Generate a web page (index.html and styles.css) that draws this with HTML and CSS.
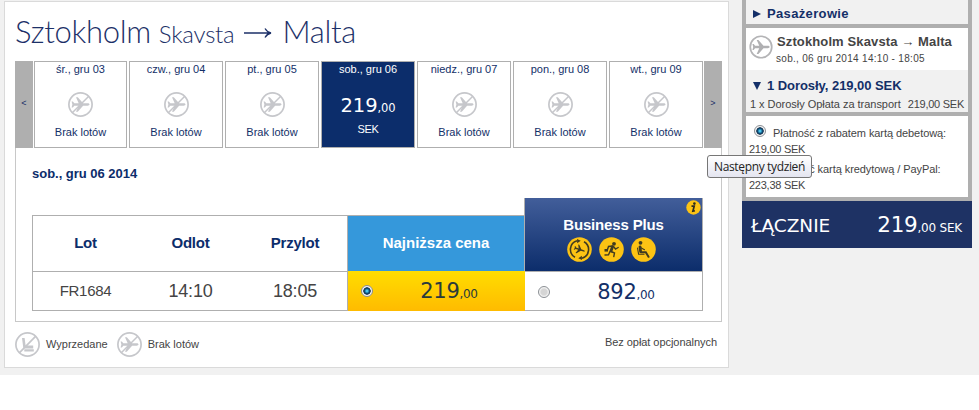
FILE: index.html
```html
<!DOCTYPE html>
<html lang="pl">
<head>
<meta charset="utf-8">
<title>Sztokholm Skavsta → Malta</title>
<link rel="stylesheet" href="styles.css">
</head>
<body>
<svg class="defs" width="0" height="0">
  <defs>
    <path id="plane" d="M21.500 12.500c0-.7-.9-1.200-1.900-1.200h-4.500L9.800 5.300H8l2.700 6H6.300L4.900 9.500H3.600l.8 3-.8 3h1.300l1.400-1.800h4.400l-2.700 6h1.800l5.300-6h4.500c1 0 1.900-.5 1.900-1.200z"/>
    <symbol id="noflight" viewBox="0 0 25 25">
      <circle cx="12.500" cy="12.500" r="11.600" fill="#fff" stroke="#c6c7cb" stroke-width="1.700"/>
      <use href="#plane" fill="#c6c7cb"/>
      <path d="M4.300 20.800 20.800 4.200" stroke="#c6c7cb" stroke-width="1.500"/>
    </symbol>
    <symbol id="soldout" viewBox="0 0 25 25">
      <circle cx="12.500" cy="12.500" r="11.600" fill="#fff" stroke="#c6c7cb" stroke-width="1.700"/>
      <path d="M7 6h2.600l1 7.500h7.600v3H9.600c-.8 0-1.300-.5-1.400-1.200zM9.300 17.300h9.500v2.200H9.300z" fill="#c6c7cb"/>
      <path d="M4.300 20.800 20.800 4.200" stroke="#c6c7cb" stroke-width="1.700"/>
    </symbol>
  </defs>
</svg>
<div class="page">
  <main class="card">
    <h1 class="route"><span class="city">Sztokholm</span><span class="airport">Skavsta</span><svg class="arrow" width="28" height="12" viewBox="0 0 28 12"><path d="M0 6H26.500M21 1.500C22.500 4 24.500 5.500 27 6C24.500 6.500 22.500 8 21 10.500" fill="none" stroke="#1c3068" stroke-width="1.300"/></svg><span class="dest">Malta</span></h1>
    <div class="week">
      <div class="nav">&lt;</div>
      <div class="day"><span class="date">śr., gru 03</span><svg class="ico"><use href="#noflight"/></svg><span class="none">Brak lotów</span></div>
      <div class="day"><span class="date">czw., gru 04</span><svg class="ico"><use href="#noflight"/></svg><span class="none">Brak lotów</span></div>
      <div class="day"><span class="date">pt., gru 05</span><svg class="ico"><use href="#noflight"/></svg><span class="none">Brak lotów</span></div>
      <div class="day active"><span class="date">sob., gru 06</span><span class="amount">219<small>,00</small></span><span class="cur">SEK</span></div>
      <div class="day"><span class="date">niedz., gru 07</span><svg class="ico"><use href="#noflight"/></svg><span class="none">Brak lotów</span></div>
      <div class="day"><span class="date">pon., gru 08</span><svg class="ico"><use href="#noflight"/></svg><span class="none">Brak lotów</span></div>
      <div class="day"><span class="date">wt., gru 09</span><svg class="ico"><use href="#noflight"/></svg><span class="none">Brak lotów</span></div>
      <div class="nav">&gt;</div>
    </div>
    <section class="panel">
      <h2 class="chosen">sob., gru 06 2014</h2>
      <div class="fares">
        <div class="flight">
          <div class="th">Lot</div><div class="th">Odlot</div><div class="th">Przylot</div>
          <div class="td num">FR1684</div><div class="td time">14:10</div><div class="td time">18:05</div>
        </div>
        <div class="low">
          <div class="low-head">Najniższa cena</div>
          <div class="price gold"><i class="radio on"></i><span class="fare">219<small>,00</small></span></div>
        </div>
        <div class="plus">
          <div class="plus-head">
            <svg class="info" width="15" height="15" viewBox="0 0 15 15"><circle cx="7.500" cy="7.500" r="7.200" fill="#fcc314"/><circle cx="8.400" cy="3.600" r="1.300" fill="#2b2a20"/><path d="M5.500 6.200h2.700L6.900 11.200l2-.5" fill="none" stroke="#2b2a20" stroke-width="1.700"/></svg>
            <span class="plus-name">Business Plus</span>
            <div class="perks">
              <svg width="25" height="25" viewBox="0 0 25 25"><circle cx="12.500" cy="12.500" r="12.300" fill="#fcc314"/><path d="M10 3.800A9 9 0 0 0 8 20.300M15 21.200A9 9 0 0 0 17 4.700" fill="none" stroke="#403b20" stroke-width="1.600"/><path d="M10 1.900l3.700 1.900-3.500 2.500zM15 23.100l-3.700-1.900 3.500-2.500z" fill="#403b20"/><use href="#plane" fill="#403b20" transform="translate(12.500 12.500) rotate(18) scale(.62) translate(-12.500 -12.500)"/></svg>
              <svg width="25" height="25" viewBox="0 0 25 25"><circle cx="12.500" cy="12.500" r="12.300" fill="#fcc314"/><circle cx="15" cy="6.800" r="1.900" fill="#403b20"/><path d="M13.500 9.800 12 14" stroke="#403b20" stroke-width="2.800" stroke-linecap="round"/><path d="M13.500 9 9.500 9.500 8.500 12.500M14.500 9.500 16.500 12 19.200 10.500M12 14.500 15.500 16 14.800 19.500M11 14.500 9.500 17.800 6 18" fill="none" stroke="#403b20" stroke-width="1.400" stroke-linecap="round"/><path d="M5.500 12h3.500v2.600H5.500z" fill="#403b20"/></svg>
              <svg width="25" height="25" viewBox="0 0 25 25"><circle cx="12.500" cy="12.500" r="12.300" fill="#fcc314"/><circle cx="9.500" cy="5.800" r="1.900" fill="#403b20"/><path d="M9 9.800 9.600 14.500" stroke="#403b20" stroke-width="2.800" stroke-linecap="round"/><path d="M10 15.200H14.800L17.500 19.800" fill="none" stroke="#403b20" stroke-width="2" stroke-linecap="round"/><path d="M9.500 10.500 13.500 12.700M6.500 11 7.600 17.200H13" fill="none" stroke="#403b20" stroke-width="1.100" stroke-linecap="round"/></svg>
            </div>
          </div>
          <div class="price"><i class="radio"></i><span class="fare">892<small>,00</small></span></div>
        </div>
      </div>
    </section>
    <footer class="legend">
      <svg class="ico"><use href="#soldout"/></svg><span class="sold">Wyprzedane</span>
      <svg class="ico"><use href="#noflight"/></svg><span class="nof">Brak lotów</span>
      <span class="note">Bez opłat opcjonalnych</span>
    </footer>
  </main>
  <aside class="summary">
    <div class="pax"><i class="tri right"></i><b class="pax-t">Pasażerowie</b></div>
    <div class="trip">
      <svg width="24" height="24" viewBox="0 0 25 25"><circle cx="12.500" cy="12.500" r="11.200" fill="none" stroke="#b4b4b6" stroke-width="1.800"/><use href="#plane" fill="#b0b0b2"/></svg>
      <div class="trip-txt"><b class="trip-name">Sztokholm Skavsta → Malta</b><span class="trip-date">sob., 06 gru 2014 14:10 - 18:05</span></div>
    </div>
    <div class="adult">
      <div class="adult-h"><i class="tri down"></i><b class="adult-t">1 Dorosły, 219,00 SEK</b></div>
      <div class="line"><span class="fee">1 x Dorosły Opłata za transport</span><span class="feev">219,00 SEK</span></div>
    </div>
    <div class="pay">
      <div class="row1"><i class="radio on"></i><span class="debit">Płatność z rabatem kartą debetową:</span></div>
      <div class="val">219,00 SEK</div>
      <div class="row2"><i class="radio"></i><span class="credit">Płatność kartą kredytową / PayPal:</span></div>
      <div class="val">223,38 SEK</div>
    </div>
    <div class="total"><span class="total-l">ŁĄCZNIE</span><span class="total-v">219<small>,00 SEK</small></span></div>
  </aside>
  <div class="tooltip"><span>Następny tydzień</span></div>
</div>
</body>
</html>
```
FILE: styles.css
```css
* { box-sizing: border-box; }
body { margin: 0; height: 410px; background: #fff; overflow: hidden; font: 11px/14px "Liberation Sans", Arial, sans-serif; color: #444; white-space: nowrap; }
.defs { position: absolute; }
.page { position: relative; display: flex; align-items: flex-start; height: 375px; padding: 1px 0 0 4px; background: #f1f1f1; }
.card { width: 725px; height: 367px; padding: 0 5px 0 10px; background: #fff; border: 1px solid #dadada; }
.route { display: flex; align-items: baseline; height: 59px; margin: 0; padding-top: 11px; font: 300 31px/36px Lato, sans-serif; color: #1c3068; }
.city { letter-spacing: -.3px; }
.airport { margin-left: 8px; font-size: 24px; letter-spacing: -.25px; }
.arrow { margin: 0 10px 0 10px; position: relative; top: -4px; }
.dest { letter-spacing: -.3px; }
.week { display: flex; gap: 2px; width: 707px; height: 87px; }
.nav { width: 18px; background: #afafaf; color: #1c3068; font-size: 9px; line-height: 85px; text-align: center; }
.nav:first-child { margin-right: -1px; }
.nav:last-child { margin-left: -1px; }
.day { display: flex; flex-direction: column; align-items: center; width: 94px; border: 1px solid #afafaf; color: #132f68; }
.nav + .day { width: 93px; }
.date { height: 30px; line-height: 14px; }
.ico { width: 25px; height: 25px; flex: none; }
.none { margin-top: 8px; }
.active { background: #0c2d6b; color: #fff; }
.amount { height: 30px; font: 19.5px/28px "DejaVu Sans", Verdana, sans-serif; letter-spacing: -.1px; }
.amount small { font-size: 11.5px; }
.cur { line-height: 14px; letter-spacing: -.3px; }
.panel { width: 707px; height: 174px; border: 1px solid #c8c8c8; border-top: 0; padding: 17px 0 0 16px; }
.chosen { height: 33px; margin: 0; font-size: 13px; line-height: 18px; color: #0c2d6b; letter-spacing: -.02px; }
.fares { display: flex; align-items: flex-end; width: 671px; height: 113px; }
.flight { display: grid; grid-template-columns: 105px 105px 104px; grid-template-rows: 56px 39px; width: 316px; height: 96px; border: 1px solid #afafaf; }
.th { font-weight: bold; font-size: 15px; line-height: 54px; text-align: center; color: #0c2d6b; border-bottom: 1px solid #afafaf; letter-spacing: -.2px; }
.td { text-align: center; line-height: 38px; }
.num { font-size: 15px; letter-spacing: -.3px; }
.time { font-size: 18px; letter-spacing: -.2px; }
.low { width: 176px; height: 96px; }
.low-head { height: 56px; border-top: 1px solid #afafaf; background: #3598db; color: #fff; font: bold 15px/54px "Liberation Sans", sans-serif; text-align: center; }
.price { display: flex; align-items: center; height: 39px; padding-left: 13px; color: #132f68; }
.gold { width: 177px; position: relative; height: 40px; padding-bottom: 1px; background: linear-gradient(#fd0, #fb0); color: #2a3a3c; }
.fare { width: 112px; margin-left: 20px; padding-top: 3px; text-align: center; font: 21px/38px "DejaVu Sans", Verdana, sans-serif; letter-spacing: -.3px; }
.fare small { font-size: 12px; }
.plus { width: 179px; height: 113px; border: solid #afafaf; border-width: 0 1px 1px; }
.plus-head { position: relative; display: flex; flex-direction: column; align-items: center; height: 74px; border-bottom: 1px solid #afafaf; padding-top: 18px; background: linear-gradient(#425e9a, #0c2d6b); }
.plus-name { font: bold 15px/18px "Liberation Sans", sans-serif; color: #fff; letter-spacing: -.15px; }
.info { position: absolute; top: 2px; right: 1px; }
.perks { display: flex; gap: 7px; margin: 3px 4px 0 0; }
.radio { width: 12px; height: 12px; flex: none; border: 1px solid #8b8f94; border-radius: 50%; background: radial-gradient(#d5d5d5 40%, #f4f4f4 65%); }
.radio.on { background: radial-gradient(circle closest-side, #47c5ee 15%, #0d4a74 50%, #12304c 68%, #f4f4f4 80%); }
.legend { display: flex; align-items: center; width: 707px; height: 45px; }
.sold, .nof { margin: 0 9px 2px 6px; }
.note { margin: 0 5px 6px auto; letter-spacing: -.05px; }
.summary { width: 230px; height: 248px; margin: -1px 0 0 13px; background: #afafaf; }
.pax { display: flex; align-items: center; height: 24px; margin: 0 4px; padding: 3px 0 0 7px; background: #f1f1f1; }
.tri { width: 0; height: 0; }
.right { border: solid transparent; border-width: 4px 0 4px 8px; border-left-color: #132f68; }
.down { border: solid transparent; border-width: 8px 4px 0; border-top-color: #132f68; }
.pax-t { margin-left: 6px; font-size: 13px; color: #132f68; letter-spacing: .35px; }
.trip { display: flex; height: 42px; margin: 4px 4px 0; padding: 7px 0 0 3px; background: #fff; }
.trip-txt { display: flex; flex-direction: column; margin-left: 4px; }
.trip-name { font-size: 13px; line-height: 14px; letter-spacing: .12px; }
.trip-date { font-size: 10px; line-height: 20px; margin-left: -1px; letter-spacing: .3px; }
.adult { height: 42px; margin: 0 4px; background: #f1f1f1; padding: 7px 0 0 4px; }
.adult-h { display: flex; align-items: center; height: 17px; padding-left: 3px; }
.adult-t { margin-left: 6px; font-size: 13px; color: #132f68; letter-spacing: -.05px; }
.line { display: flex; justify-content: space-between; padding-right: 4px; line-height: 20px; }
.fee { letter-spacing: -.03px; }
.feev { letter-spacing: -.25px; }
.pay { height: 81px; margin: 4px 4px 0; padding: 8px 0 0 3px; background: #fff; }
.row1, .row2 { display: flex; height: 18px; line-height: 18px; }
.debit, .credit { letter-spacing: -.07px; }
.pay .radio { margin: 1px 7px 0 5px; }
.val { height: 18px; line-height: 15px; letter-spacing: -.25px; }
.total { display: flex; align-items: baseline; justify-content: space-between; height: 47px; margin-top: 4px; padding: 5px 10px 0 9px; background: #1e3264; color: #fff; font: 18.5px/38px "DejaVu Sans", Verdana, sans-serif; }
.total-v { font-size: 21.5px; letter-spacing: -.3px; }
.total small { font-size: 12px; letter-spacing: -.2px; }
.tooltip { position: absolute; left: 707px; top: 155px; width: 105px; height: 23px; border: 1px solid #767676; border-radius: 3px; background: linear-gradient(#fff, #e4e5f0); color: #222; font: 12px/22px "Open Sans", sans-serif; letter-spacing: -.35px; text-align: center; }
```
